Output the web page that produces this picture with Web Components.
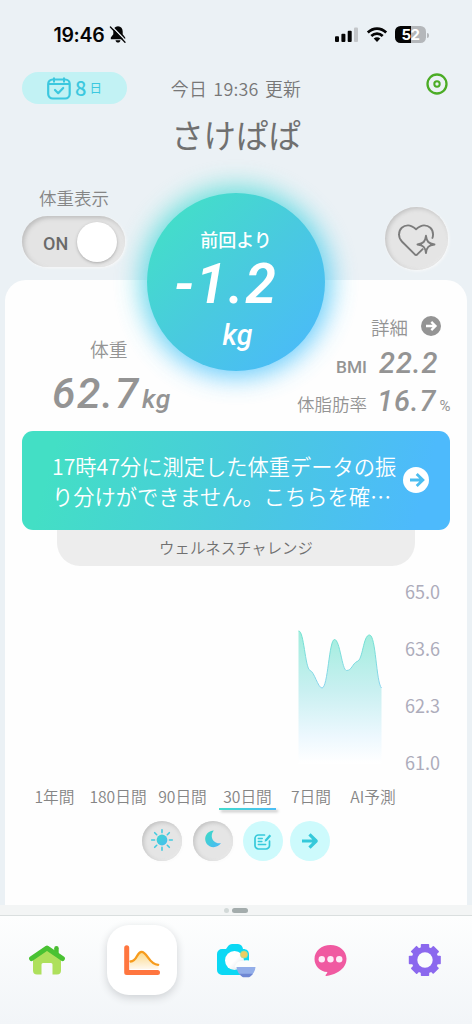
<!DOCTYPE html>
<html lang="ja">
<head>
<meta charset="utf-8">
<title>Wellness</title>
<style>
html,body{margin:0;padding:0}
body{width:472px;height:1024px;overflow:hidden;background:#ebf1f5;font-family:"Noto Sans CJK JP","Noto Sans",sans-serif;font-weight:350;color:#777}
</style>
</head>
<body>
<wellness-app></wellness-app>
<script>
const define = (name, css, html) => customElements.define(name, class extends HTMLElement {
  constructor() {
    super();
    const t = document.createElement('template');
    t.innerHTML = `<style>*{box-sizing:border-box}${css}</style>${html}`;
    this.attachShadow({mode: 'open'}).append(t.content.cloneNode(true));
  }
});

const ICONS = {
  mute: ['0 0 16 17', '<path d="M8 .3C5 .6 3.300 2.600 3.300 5.400v2.900L.8 11.600v1.600h14.400v-1.600l-2.500-3.300V5.400C12.700 2.600 11 .600 8 .3zM5.500 14.300h5c-.3 1.500-1.200 2.300-2.500 2.300s-2.200-.8-2.500-2.300z" fill="#050505"/><path d="M1.700 .200 16 15" stroke="#ebf1f5" stroke-width="1.300"/><path d="M.4 1 15 16.300" stroke="#050505" stroke-width="1.300" stroke-linecap="round"/>'],
  signal: ['0 0 24 16', '<g fill="#050505"><rect x="0" y="9.300" width="4" height="5.700" rx="1"/><rect x="6.400" y="6.800" width="4" height="8.200" rx="1"/><rect x="12.700" y="3.800" width="4" height="11.200" rx="1"/></g><rect x="19" y="0.500" width="4" height="14.500" rx="1" fill="#c3c6c9"/>'],
  wifi: ['0 0 20 15', '<g fill="none" stroke="#050505" stroke-width="2.700"><path d="M.8 5.500C6.200.3 13.800.3 19.200 5.500"/><path d="M4.300 9c3.300-3.200 8.100-3.200 11.400 0"/></g><path d="M6.700 11.500c1.900-1.700 4.700-1.700 6.600 0L10 14.900z" fill="#050505"/>'],
  calendar: ['0 0 24 23', '<g fill="none" stroke="#3cc8df" stroke-width="2.200" stroke-linecap="round" stroke-linejoin="round"><rect x="1.200" y="2.500" width="21.500" height="19" rx="4.500"/><path d="M2 7h20" stroke-width="1.800"/><path d="M7 1.200v3.500M17 1.200v3.500" stroke-width="2"/><path d="m8 13 3.200 3.200L16.200 11"/></g>'],
  target: ['0 0 22 22', '<g fill="none" stroke="#4bac25"><circle cx="11" cy="11" r="9.500" stroke-width="2.300"/><circle cx="11" cy="11" r="2.700" stroke-width="2"/></g>'],
  heart: ['0 0 42 36', '<g fill="none" stroke="#7c7c7c" stroke-width="2" stroke-linejoin="round"><path d="m27.500 26-6.200 6.200a1.600 1.600 0 0 1-2.600 0L5 18.500A10 10 0 0 1 2 11C2 5 6.500 1.500 11.500 1.500c3.500 0 5.500 1.500 8.500 4 3-2.500 5-4 8.500-4C33.500 1.500 38 5 38 11c0 1.800-.4 3.300-1 4.500"/><path d="M30.500 12.500c.9 6.300 2.600 8.200 9 9.200-6.400 1-8.100 2.700-9 9-.9-6.300-2.600-8-9-9 6.400-1 8.100-2.900 9-9.200z" fill="#e5e5e5"/></g>'],
  go: ['0 0 20 20', '<circle cx="10" cy="10" r="10" fill="#949494"/><path d="M5 10h9M10.300 5.900l4.200 4.100-4.200 4.100" fill="none" stroke="#fff" stroke-width="2.300"/>'],
  banner: ['0 0 26 26', '<circle cx="13" cy="13" r="13" fill="#fff"/><path d="M7 13h12M13.700 6.900l6.200 6.100-6.200 6.100" fill="none" stroke="#4bbdf0" stroke-width="2.800"/>'],
  sun: ['0 0 22 22', '<defs><linearGradient id="g" x1="0" y1="0" x2="1" y2="1"><stop stop-color="#3fd5cf"/><stop offset="1" stop-color="#45bdf1"/></linearGradient></defs><circle cx="11" cy="11" r="5.400" fill="url(#g)"/><path d="M11 .7v2.900M11 18.400v2.900M.7 11h2.900M18.400 11h2.900M3.700 3.700l2 2M16.300 16.300l2 2M3.700 18.300l2-2M16.300 5.700l2-2" stroke="#42cbe0" stroke-width="1.600" stroke-linecap="round"/>'],
  moon: ['0 0 18 18', '<defs><linearGradient id="g" x1="0" y1="0" x2="1" y2="1"><stop offset=".15" stop-color="#3ed6cb"/><stop offset=".9" stop-color="#4abaf5"/></linearGradient></defs><path d="M9.800.600C6.800 4.200 7.200 9 10.300 11.600c2 1.800 4.300 2 6.700 1.500C14.500 17 9.500 18.200 5.600 16.200-1.200 12.600-.2 1.500 9.800.600z" fill="url(#g)"/>'],
  note: ['0 0 18 17', '<g fill="none" stroke="#35c9da" stroke-width="1.700" stroke-linecap="round"><path d="M10.500 2H4.500A3.500 3.500 0 0 0 1 5.500v7A3.500 3.500 0 0 0 4.500 16h7.500a3.500 3.500 0 0 0 3.500-3.500V8"/><path d="M4.300 5.500h4M4.300 8.500h3.600M4.300 11.500h7.400" stroke-width="1.400"/></g><path d="m10.600 8.700.5-2.300L15.500 1.600l1.700 1.500-4.400 4.800z" fill="#35c9da"/>'],
  arrow: ['0 0 17 16', '<path d="M1 8h14M8.500 1.300 15.200 8l-6.700 6.700" fill="none" stroke="#35c9da" stroke-width="3.200" stroke-linejoin="round"/>'],
  home: ['0 0 38 32', '<path d="M5 14 19 4l14 10v12.500a4 4 0 0 1-4 4h-4.500V20.500a1.500 1.500 0 0 0-1.500-1.500h-8a1.500 1.500 0 0 0-1.500 1.500v10H9a4 4 0 0 1-4-4z" fill="#aee05c"/><path d="M26.200 9V4.200a2.200 2.200 0 0 1 4.500 0V11z" fill="#49bd32"/><path d="M3.600 14.500 19 4l15.400 10.500" fill="none" stroke="#49c233" stroke-width="5" stroke-linecap="round" stroke-linejoin="round"/>'],
  chart: ['0 0 38 32', '<defs><linearGradient id="g" x1="0" y1="0" x2="0" y2="1"><stop stop-color="#fbd98a"/><stop offset="1" stop-color="#fff8ed"/></linearGradient></defs><path d="M7 17.500c6 0 6-9 11.500-9 6 0 7 12 17 12V25H7z" fill="url(#g)"/><path d="M7.500 17.500c7 0 6-9.700 11-9.700 6 0 7 12.500 16.700 13" fill="none" stroke="#f79b1c" stroke-width="2.300" stroke-linecap="round"/><path d="M3.700 3.700V28.500H34.500" fill="none" stroke="#ff763f" stroke-width="5" stroke-linecap="round" stroke-linejoin="round"/>'],
  camera: ['0 0 42 38', '<defs><linearGradient id="g" x1="0" y1="0" x2="1" y2="1"><stop offset=".5" stop-color="#fff"/><stop offset="1" stop-color="#d7dde3"/></linearGradient></defs><path d="M2 13a5 5 0 0 1 5-5h4l2.300-3.300A5 5 0 0 1 17 3h6a6 6 0 0 1 5 5c4 0 6 2 6 6v17a3 3 0 0 1-3 3H7a5 5 0 0 1-5-5z" fill="#0bd8f4"/><circle cx="19.500" cy="19.500" r="9.500" fill="url(#g)"/><circle cx="29" cy="13.500" r="3.600" fill="#edcd60" stroke="#a4dc91" stroke-width=".7"/><path d="M19.500 26.500c1-4 4-7 7-6.500 4-1.500 12-1 14 4.500v2z" fill="#fbfdfd"/><path d="M21.500 26h19c-.3 4.400-2.500 7.600-6.500 9.800h-6C24 33.600 21.800 30.400 21.500 26z" fill="#93aee9"/><path d="M24.500 32.700h13.500c-1 1.300-2 2.300-4 3.600h-6c-1.600-1-2.700-2.200-3.500-3.600z" fill="#6f87d3"/>'],
  chat: ['0 0 34 33', '<path d="M17 1c9.300 0 16.500 6 16.500 14.300 0 7-5 12-10.200 14.400-3.500 1.700-6.800 2.800-10.500 3.300-1 .1-1.300-.5-.7-1.200.8-.8 1.500-1.600 1.700-2.800C6 28.500.5 22.500.5 15.500.5 7 7.700 1 17 1z" fill="#f05aa1"/><g fill="#fdeef8"><circle cx="8" cy="15.800" r="3.300"/><circle cx="17" cy="15.800" r="3.300"/><circle cx="26" cy="15.800" r="3.300"/></g>'],
  gear: ['0 0 34 34', '<g fill="#8b68ee"><circle cx="17" cy="17" r="13.300"/><g id="t"><rect x="12.800" y="1" width="8.400" height="32" rx=".8"/><rect x="1" y="12.800" width="32" height="8.400" rx=".8" transform="translate(-.2)"/></g><use href="#t" transform="rotate(45 17 17)"/></g><circle cx="17" cy="17" r="7.700" fill="#fafcfd"/>']
};
customElements.define('ui-icon', class extends HTMLElement {
  constructor() {
    super();
    this.attachShadow({mode: 'open'});
  }
  connectedCallback() {
    const [box, body] = ICONS[this.getAttribute('name')];
    this.shadowRoot.innerHTML = `<style>:host{display:block;flex:none}svg{display:block;width:100%;height:100%;overflow:visible}</style><svg viewBox="${box}">${body}</svg>`;
  }
});

define('status-bar', `
:host{display:flex;height:70px;align-items:center;padding:0 43.500px 0 53.500px;font:600 19.500px/24px Inter,sans-serif;color:#050505}
.time{letter-spacing:-.3px;width:55px;white-space:nowrap}
.mute{width:16px;height:17px;margin-left:1px;margin-top:-1px}
.signal{width:24px;height:16px;margin-left:auto}
.wifi{width:20px;height:15px;margin-left:8px;margin-top:-1px}
.battery{width:31px;height:17px;border-radius:5.500px;margin-left:8px;margin-top:-1px;background:linear-gradient(90deg,#050505 52%,#b4b7ba 52%);color:#fff;font:700 15px/17px Inter,sans-serif;text-align:center;letter-spacing:-.4px}
.cap{width:1.500px;height:5px;border-radius:0 2px 2px 0;background:#b4b7ba;margin-left:1px}`,
`<span class="time">19:46</span><ui-icon class="mute" name="mute"></ui-icon><ui-icon class="signal" name="signal"></ui-icon><ui-icon class="wifi" name="wifi"></ui-icon><span class="battery">52</span><span class="cap"></span>`);

define('app-header', `
:host{display:grid;grid-template-columns:105px 1fr 105px;padding:2px 22px 0;height:118px}
.days{height:32px;border-radius:16px;background:#c2f2f4;color:#3cc8df;display:flex;align-items:center;padding-left:25px}
.days ui-icon{width:24px;height:23px}
.days b{font-weight:500;font-size:20px;line-height:32px;margin-left:4px;height:32px;width:14.500px}
.days small{font-size:12.500px;font-weight:400;line-height:32px}
.mid{text-align:center;color:#777;white-space:nowrap}
.updated{font-size:17.900px;line-height:32px;letter-spacing:.25px;word-spacing:2px}
.name{font-size:32.500px;font-weight:400;line-height:44px;margin-top:8px;color:#707070;letter-spacing:-.1px}
.target{width:22px;height:22px;justify-self:end;margin:1px 2px 0 0}`,
`<div class="days"><ui-icon name="calendar"></ui-icon><b>8</b><small>日</small></div>
<div class="mid"><div class="updated">今日 19:36 更新</div><div class="name">さけぱぱ</div></div>
<ui-icon class="target" name="target"></ui-icon>`);

define('weight-toggle', `
:host{display:block;width:104px;padding-top:1px}
.label{font-size:17.500px;line-height:20px;text-align:center;color:#858585}
.track{margin-top:8px;width:103px;height:51px;border-radius:26px;background:#e4e4e4;box-shadow:inset 2px 2px 4px #bdbdbd,inset -1px -1px 3px #ececec,1px 1px 3px #f8f8f8;display:flex;align-items:center;justify-content:space-between;padding:0 8px 0 21px}
.on{font:500 18px/22px Roboto,sans-serif;color:#6a6a6a;padding-top:4px}
.knob{width:40px;height:40px;border-radius:50%;background:#fff;box-shadow:0 1px 3px #aaa}`,
`<div class="label">体重表示</div><div class="track"><span class="on">ON</span><span class="knob"></span></div>`);

define('inset-button', `
:host{display:flex;align-items:center;justify-content:center;border-radius:50%;background:#e5e5e5;box-shadow:inset 1.500px 1.500px 4px #c0c0c0,inset -1px -1px 2px #ededed,1px 1px 3px #fafafa}
:host([flat]){background:#cdfafc;box-shadow:none}`, `<slot></slot>`);

define('change-bubble', `
:host{display:flex;flex-direction:column;align-items:center;width:178px;height:178px;border-radius:50%;background:linear-gradient(135deg,#43dfc8 10%,#49cadf 50%,#4abbf8 90%);color:#fff;position:relative}
:host::before{content:"";position:absolute;inset:-6px;border-radius:50%;background:linear-gradient(160deg,#50e3cd,#4cc3fb 75%);filter:blur(13px);z-index:-1;opacity:.85}
.t{font-size:18px;font-weight:500;line-height:24px;margin-top:34px}
.v{font:italic 600 55.500px/56px Roboto,sans-serif;margin-top:6px;letter-spacing:1.800px;margin-right:20px}
.u{font:italic 500 28.500px/34px Roboto,sans-serif;margin-top:6px;margin-left:3px}`,
`<div class="t">前回より</div><div class="v">-1.2</div><div class="u">kg</div>`);

define('body-metrics', `
:host{display:flex;height:151px;color:#949494}
.weight{width:190px;padding:58px 0 0 47px}
.cap{font-size:18.800px;line-height:22px;padding-left:38px}
.row{display:flex;align-items:baseline;white-space:nowrap}
.num{font:italic 500 42.500px/44px Roboto,sans-serif;letter-spacing:1.500px;margin-top:12px;width:90px}
.unit{font:italic 500 26.500px/30px Roboto,sans-serif;letter-spacing:.5px}
.side{margin-left:auto;width:176px}
.detail{display:flex;align-items:center;padding:34.500px 0 0 80px;font-size:18.500px;line-height:24px;gap:12.500px;margin-bottom:5px}
.detail ui-icon{width:20px;height:20px;margin-top:-1px}
.m{display:grid;grid-template-columns:76px 64px auto;align-items:baseline;white-space:nowrap}
.m .k{text-align:right}
.bmi{font:500 17.300px/22px Roboto,sans-serif}
.fat{font-size:17.500px;line-height:20px}
.m .n{font:italic 500 29px/38px Roboto,sans-serif;letter-spacing:.9px;padding-left:12px}
.m .n.low{padding-left:10px}
.pct{font:400 15px/20px Roboto,sans-serif;padding-left:8.500px}`,
`<div class="weight"><div class="cap">体重</div><div class="row"><span class="num">62.7</span><span class="unit">kg</span></div></div>
<div class="side"><div class="detail"><span>詳細</span><ui-icon name="go"></ui-icon></div>
<div class="m"><span class="k bmi">BMI</span><span class="n">22.2</span></div>
<div class="m"><span class="k fat">体脂肪率</span><span class="n low">16.7</span><span class="pct">%</span></div></div>`);

define('notice-banner', `
:host{display:flex;align-items:center;margin:0 17px;height:98.500px;border-radius:11px;background:linear-gradient(105deg,#43dfc5 8%,#49c9df 54%,#4dbafc 92%);color:#fff;padding-left:30px}
.txt{font-size:21.250px;line-height:30px;white-space:nowrap;width:351px;padding-top:1px}
ui-icon{width:26px;height:26px}`,
`<div class="txt">17時47分に測定した体重データの振<br>り分けができません。こちらを確…</div><ui-icon name="banner"></ui-icon>`);

define('challenge-tab', `
:host{display:block;margin:0 52px;width:358px;height:36.500px;border-radius:0 0 23px 23px;background:#ededed;text-align:center;font-size:15.400px;line-height:35px;color:#707070}`,
`<slot></slot>`);

define('weight-chart', `
:host{display:grid;grid-template-columns:1fr 36px;padding:0 27px 0 0;height:215px}
svg{display:block;width:399px;height:215px;margin-top:-.5px}
.axis{display:flex;flex-direction:column;justify-content:space-between;padding:13.500px 0 7.500px;font-size:18px;font-weight:400;line-height:22px;color:#adacbb;text-align:right}`,
`<svg viewBox="5 566 399 215"><defs><linearGradient id="f" x1="0" y1="631" x2="0" y2="763" gradientUnits="userSpaceOnUse"><stop stop-color="#a0eddd"/><stop offset=".45" stop-color="#c9f0f1"/><stop offset=".8" stop-color="#edf8fe"/><stop offset="1" stop-color="#fff"/></linearGradient><linearGradient id="s" x1="0" y1="631" x2="0" y2="690" gradientUnits="userSpaceOnUse"><stop stop-color="#6fe2ce"/><stop offset="1" stop-color="#8cd4ef"/></linearGradient></defs>
<path d="M298.500 631C304 630 305 668 310 670.500C314 671 318 688 322 688C328 688 329 639.500 334.500 639.500C340 639.500 342 670.500 346.500 670.500C352 670.500 352 664 357 661.500C363 660.500 363 635 369.500 635C376 635 376 682 381.500 688V764H298.500Z" fill="url(#f)"/>
<path d="M298.500 631C304 630 305 668 310 670.500C314 671 318 688 322 688C328 688 329 639.500 334.500 639.500C340 639.500 342 670.500 346.500 670.500C352 670.500 352 664 357 661.500C363 660.500 363 635 369.500 635C376 635 376 682 381.500 688" fill="none" stroke="url(#s)" stroke-width="1"/></svg>
<div class="axis"><span>65.0</span><span>63.6</span><span>62.3</span><span>61.0</span></div>`);

define('period-tabs', `
:host{display:flex;height:40px;font-size:15.700px;line-height:32px;color:#858585;white-space:nowrap;padding-left:29px}
span{display:block;text-align:center;height:29px}
.a{width:41px}.b{width:60px;margin-left:13px}.c{width:51px;margin-left:9px}.e{width:42px;margin-left:14px}.f{width:50px;margin-left:16px}
.d{width:57px;margin-left:11px}
.d::after{content:"";display:block;height:2px;margin-top:-5px;background:linear-gradient(90deg,#43dbcd,#4bbdf5);box-shadow:2px 2px 3px #bbb}`,
`<span class="a">1年間</span><span class="b">180日間</span><span class="c">90日間</span><span class="d">30日間</span><span class="e">7日間</span><span class="f">AI予測</span>`);

define('filter-row', `
:host{display:flex;padding-left:137px}
inset-button{width:40px;height:40px}
inset-button:nth-of-type(2){margin-left:11px}
inset-button:nth-of-type(3){margin-left:10px}
inset-button:nth-of-type(4){margin-left:7px}
.sun{width:22px;height:22px;margin-top:-2px}.moon{width:18px;height:18px;margin-top:-4px}.note{width:18px;height:17px}.arrow{width:17px;height:16px;margin-left:-1px}`,
`<inset-button><ui-icon class="sun" name="sun"></ui-icon></inset-button><inset-button><ui-icon class="moon" name="moon"></ui-icon></inset-button><inset-button flat><ui-icon class="note" name="note"></ui-icon></inset-button><inset-button flat><ui-icon class="arrow" name="arrow"></ui-icon></inset-button>`);

define('page-dots', `
:host{display:flex;height:11px;align-items:center;gap:3px;padding-left:224px;background:#f3f5f5;border-bottom:1px solid #dadfdf}
i{width:5px;height:5px;border-radius:50%;background:#d2d9d8}i+i{width:16px;border-radius:3px;background:#a3acac}`, `<i></i><i></i>`);

define('tab-bar', `
:host{display:grid;grid-template-columns:repeat(5,94.400px);height:108px;padding-top:9px;background:linear-gradient(#fdfefe,#f2f5f8)}
div{width:70px;height:70px;display:flex;align-items:center;justify-content:center;justify-self:center}
.on{background:#fff;border-radius:22px;box-shadow:0 3px 9px #cfd2d5}
.home,.chart{width:38px;height:32px}.camera{width:42px;height:38px;margin:-1px 0 0 1px}.chat{width:33px;height:32px}.gear{width:34px;height:34px}`,
`<div><ui-icon class="home" name="home"></ui-icon></div><div class="on"><ui-icon class="chart" name="chart"></ui-icon></div><div><ui-icon class="camera" name="camera"></ui-icon></div><div><ui-icon class="chat" name="chat"></ui-icon></div><div><ui-icon class="gear" name="gear"></ui-icon></div>`);

define('wellness-app', `
:host{display:flex;flex-direction:column;width:472px;height:1024px;overflow:hidden;position:relative;isolation:isolate;background:#ebf1f5}
.controls{display:flex;justify-content:space-between;height:92px;padding:0 24px 0 22px;margin-top:-1px}
.heart{width:63px;height:63px;margin-top:20px}
.heart ui-icon{width:40px;height:34px;margin:4px 0 0 1px}
.card{margin:1px 5px 0;height:625px;flex:none;border-radius:21px 21px 0 0;background:#fefefe;position:relative;z-index:-2}
change-bubble{position:absolute;left:147px;top:193px}`,
`<status-bar></status-bar><app-header></app-header>
<div class="controls"><weight-toggle></weight-toggle><inset-button class="heart"><ui-icon name="heart"></ui-icon></inset-button></div>
<div class="card"><body-metrics></body-metrics><notice-banner></notice-banner><challenge-tab>ウェルネスチャレンジ</challenge-tab><weight-chart></weight-chart><period-tabs></period-tabs><filter-row></filter-row></div>
<change-bubble></change-bubble>
<page-dots></page-dots><tab-bar></tab-bar>`);
</script>
</body>
</html>
